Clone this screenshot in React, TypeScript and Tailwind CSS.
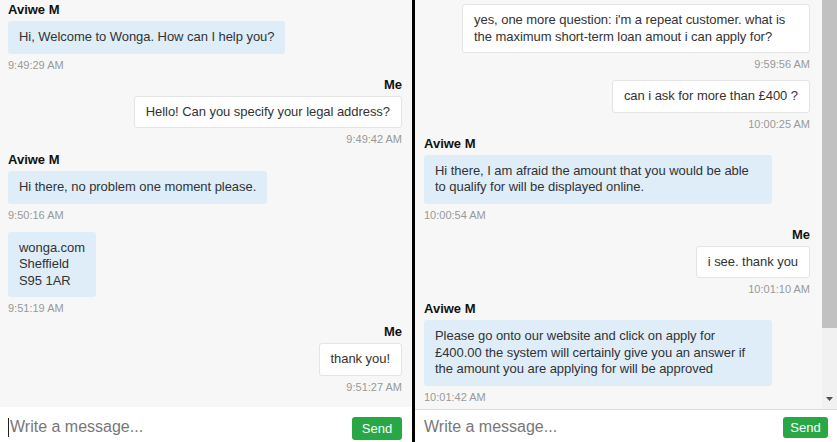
import clsx from 'clsx';

type Msg = {
  mine: boolean;
  showName: boolean;
  text: string;
  time: string;
  gap: string;
};

const leftMessages: Msg[] = [
  { mine: false, showName: true, text: 'Hi, Welcome to Wonga. How can I help you?', time: '9:49:29 AM', gap: 'mt-0' },
  { mine: true, showName: true, text: 'Hello! Can you specify your legal address?', time: '9:49:42 AM', gap: 'mt-[2px]' },
  { mine: false, showName: true, text: 'Hi there, no problem one moment please.', time: '9:50:16 AM', gap: 'mt-[3px]' },
  { mine: false, showName: false, text: 'wonga.com\nSheffield\nS95 1AR', time: '9:51:19 AM', gap: 'mt-[9px]' },
  { mine: true, showName: true, text: 'thank you!', time: '9:51:27 AM', gap: 'mt-[6px]' },
];

const rightMessages: Msg[] = [
  {
    mine: true,
    showName: false,
    text: "yes, one more question: i'm a repeat customer. what is the maximum short-term loan amout i can apply for?",
    time: '9:59:56 AM',
    gap: 'mt-0',
  },
  { mine: true, showName: false, text: 'can i ask for more than £400 ?', time: '10:00:25 AM', gap: 'mt-[8px]' },
  {
    mine: false,
    showName: true,
    text: 'Hi there, I am afraid the amount that you would be able to qualify for will be displayed online.',
    time: '10:00:54 AM',
    gap: 'mt-[2px]',
  },
  { mine: true, showName: true, text: 'i see. thank you', time: '10:01:10 AM', gap: 'mt-[2px]' },
  {
    mine: false,
    showName: true,
    text: 'Please go onto our website and click on apply for £400.00 the system will certainly give you an answer if the amount you are applying for will be approved',
    time: '10:01:42 AM',
    gap: 'mt-[2px]',
  },
];

const Message = ({ msg }: { msg: Msg }) => (
  <div className={clsx('flex flex-col', msg.mine ? 'items-end' : 'items-start', msg.gap)}>
    {msg.showName && (
      <div className="text-[13px] font-bold leading-[20px] text-[#111]">{msg.mine ? 'Me' : 'Aviwe M'}</div>
    )}
    <div
      className={clsx(
        'max-w-[348px] whitespace-pre-line rounded-[3px] px-[11px] text-[13px] leading-[16.5px] tracking-[-0.05px] text-[#333]',
        msg.showName && 'mt-px',
        msg.mine ? 'border border-[#e4e4e4] bg-white py-[7px]' : 'bg-[#deedf8] py-[8px]'
      )}
    >
      {msg.text}
    </div>
    <div className="mt-[4px] text-[11px] leading-[15px] text-[#999]">{msg.time}</div>
  </div>
);

const Scrollbar = () => (
  <div className="flex w-[15px] flex-col bg-[#f1f1f1]">
    <div className="h-[328px] bg-[#c1c1c1]" />
    <div className="flex-1" />
    <div className="flex h-[17px] items-center justify-center pb-[3px]">
      <svg width="7" height="4" viewBox="0 0 7 4">
        <path d="M0 0h7L3.5 4z" fill="#505050" />
      </svg>
    </div>
  </div>
);

export default function App() {
  return (
    <div className="flex h-[442px] w-[837px] overflow-hidden bg-white font-['Liberation_Sans',Arial,sans-serif]">
      {/* left chat */}
      <div className="flex w-[412px] flex-col">
        <div className="h-[407px] overflow-hidden bg-[#f7f7f7] pl-[8px] pr-[10px]">
          {leftMessages.map((m) => (
            <Message key={m.time} msg={m} />
          ))}
        </div>
        <div className="flex flex-1 items-start justify-between bg-white pl-[8px] pr-[10px] pt-[10px]">
          <div className="flex items-center text-[16px] leading-[20px] text-[#777]">
            <span className="h-[19px] w-px bg-[#222]" />
            <span className="ml-[1px]">Write a message...</span>
          </div>
          <button
            type="button"
            className="h-[23px] w-[50px] rounded-[3px] bg-[#28a745] text-center text-[13px] leading-[23px] text-white"
          >
            Send
          </button>
        </div>
      </div>

      <div className="w-[3px] bg-black" />

      {/* right chat */}
      <div className="flex flex-1 flex-col">
        <div className="flex h-[409px]">
          <div className="flex-1 overflow-hidden bg-[#f7f7f7] pl-[9px] pr-[12px] pt-[4px]">
            {rightMessages.map((m) => (
              <Message key={m.time} msg={m} />
            ))}
          </div>
          <Scrollbar />
        </div>
        <div className="flex flex-1 items-start justify-between border-t border-[#dcdcdc] bg-white pl-[9px] pr-[9px] pt-[7px]">
          <span className="text-[16px] leading-[20px] text-[#777]">Write a message...</span>
          <button
            type="button"
            className="h-[21px] w-[45px] rounded-[3px] bg-[#28a745] text-center text-[13px] leading-[21px] text-white"
          >
            Send
          </button>
        </div>
      </div>
    </div>
  );
}
